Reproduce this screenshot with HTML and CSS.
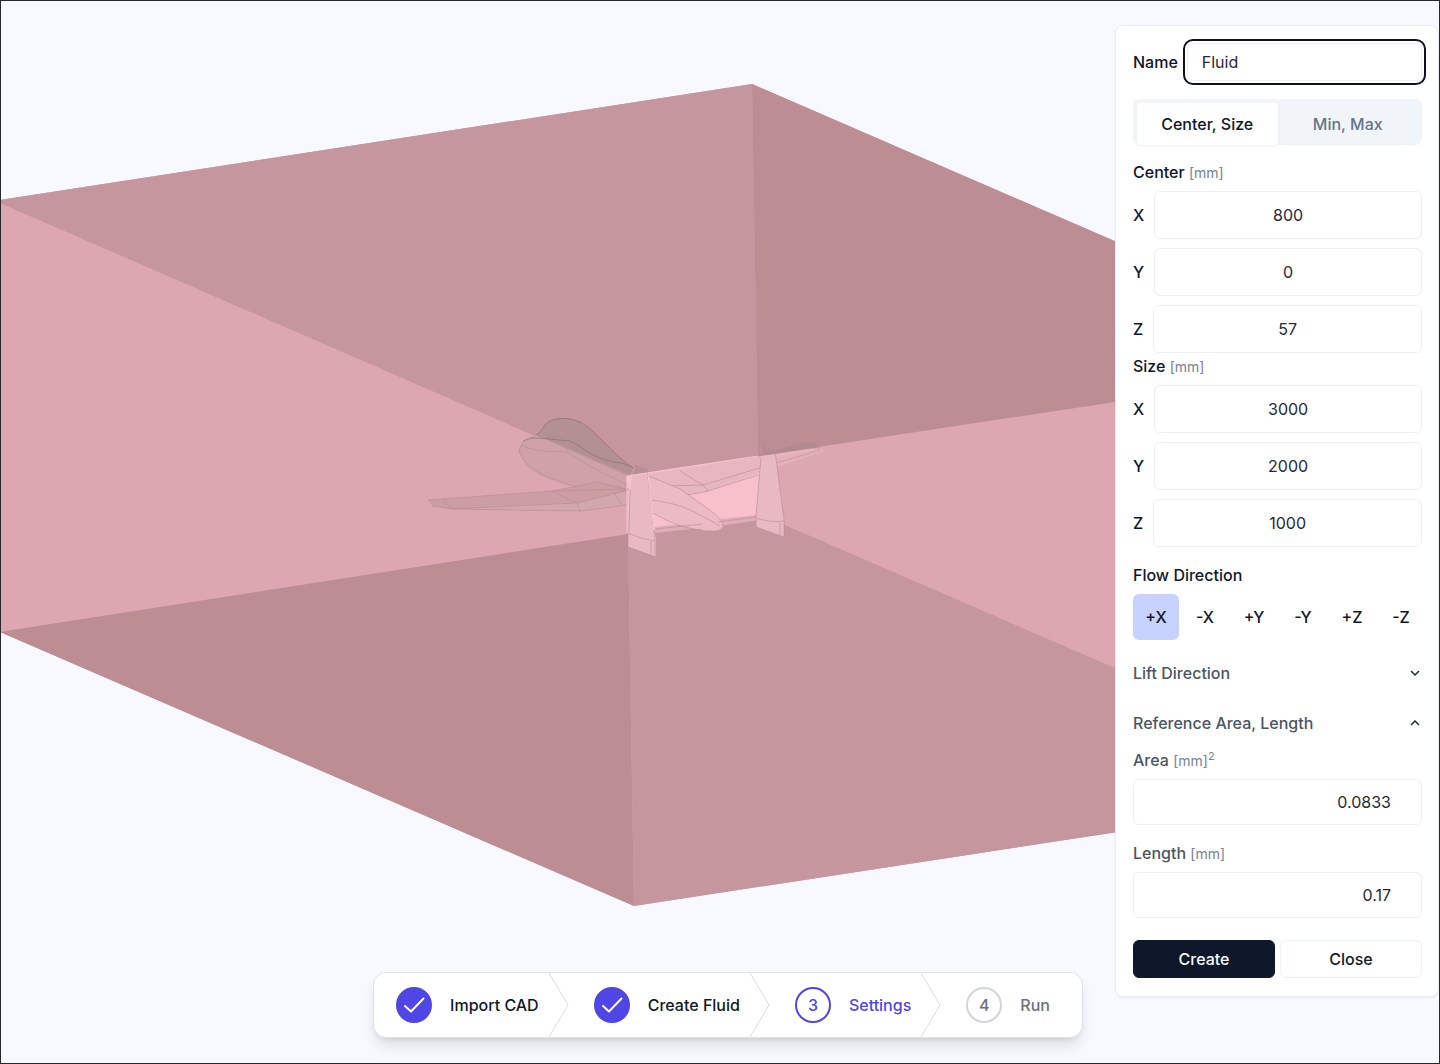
FILE: index.html
```html
<!DOCTYPE html>
<html lang="en">
<head>
<meta charset="utf-8">
<meta name="viewport" content="width=device-width, initial-scale=1">
<title>Create Fluid</title>
<link rel="stylesheet" href="styles.css">
</head>
<body>
<main class="workspace">
  <svg class="scene" viewBox="1 1 1438 1062" preserveAspectRatio="xMidYMid slice" role="img" aria-label="Aircraft inside the fluid domain box">
    <!-- fluid domain -->
    <path fill="#dca7b0" d="M0 200 752 84 1438 381V783L634 906 0 632Z"/>
    <path fill="#c5969d" d="M0 200 752 84 758 457 627 476 0 203Z"/>
    <path fill="#bc8e94" d="M752 84 1438 381V353L758 456Z"/>
    <path fill="#bc8e94" d="M0 632 628 534 634 906Z"/>
    <path fill="#c5969d" d="M628 534 764 516 1438 808V783L634 906Z"/>
    <path fill="#f8c0cb" d="M627 476 760 456V517L628 535Z"/>
    <!-- front fuselage and left wing -->
    <path fill="#cfa1a8" d="M536 435Q524 438 523 443Q517 448 519 452C524 466 530 471 543 477Q560 484 577 487L627 493V476Z"/>
    <path fill="#b39093" d="M536 435C542 433 542 425 550 421Q563 415 580 422C596 430 610 452 633 468L630 475Z"/>
    <path fill="#cd9da4" d="M428 500 552 491 598 482 628 488V505L580 511 452 509 432 506Z"/>
    <path fill="#d3a8ad" d="M452 509 577 503 617 493 628 492V505L580 511Z"/>
    <g class="edge edge-dark">
      <path d="M523 441Q530 437 538 438L570 441C585 448 595 461 622 463L634 468M536 435C542 433 542 425 550 421Q563 415 580 422C596 430 610 452 633 468"/>
    </g>
    <g class="edge">
      <path d="M522 445Q532 452 567 452C578 458 590 468 628 485M519 450C524 467 540 476 577 487M536 435 523 442 519 451"/>
      <path d="M428 500 552 491 598 482 628 490M432 506 452 509 577 503 617 493 629 489M443 500 452 509 580 511 627 505M552 491 577 503 580 511M613 492Q618 498 621 505M552 491 629 489"/>
    </g>
    <!-- right wing -->
    <path fill="#e8b6c0" d="M648 474 760 456 803 447 824 451 777 467 708 491 683 496 648 479Z"/>
    <path fill="#e3b1ba" d="M777 456 822 449 824 451 777 467Z"/>
    <path fill="#b1898f" d="M740 459 762 454Q790 446 803 443L813 443 821 447 775 454Z"/>
    <g class="edge">
      <path d="M680 471 703 485 708 491 758 475M667 486 703 485 820 450M683 496 708 491"/>
    </g>
    <!-- tailplane and rear fuselage -->
    <path fill="#dfadb7" d="M655 527 772 513V518L720 526 655 533Z"/>
    <path fill="#ebbac4" d="M648 475Q664 482 680 489L707 508Q723 519 723 526Q723 532 710 531Q685 529 653 513Z"/>
    <g class="edge">
      <path d="M648 476Q664 482 680 489L707 508Q723 519 723 526Q722 532 708 531M652 500Q672 503 683 507T720 526M653 513Q680 529 702 530M655 529 703 524M718 522 771 515"/>
    </g>
    <!-- fins -->
    <path fill="#e9b9c3" d="M634 466 647 469 652 521 656 538V557L628 547V522L630 490Z"/>
    <path fill="#e9b9c3" d="M762 445 775 450 784 520V537L756 527V512L761 457Z"/>
    <path fill="#b98e94" d="M633 475 635 465 647 469 648 473Z"/>
    <path fill="#b58a90" d="M761 456 762 445 775 450 776 454Z"/>
    <g class="edge">
      <path d="M635 465 647 469 655 540V557L628 547V533Q640 539 655 541M651 541V555M633 474 635 465M629 532 630 490"/>
      <path d="M762 445 775 450 784 520V537L756 527V518Q770 523 784 521M780 522V536M761 457 756 518"/>
    </g>
    <path class="edge-light" d="M627 476 758 456M627 476V533M648 474 654 530"/>
  </svg>

  <form class="panel" onsubmit="return false">
    <div class="name-row">
      <label for="name">Name</label>
      <input class="input name-input" id="name" type="text" value="Fluid">
    </div>
    <div class="tabs" role="tablist">
      <button class="tab tab-active" type="button" role="tab" aria-selected="true">Center, Size</button>
      <button class="tab" type="button" role="tab" aria-selected="false">Min, Max</button>
    </div>

    <fieldset class="vector center-vector">
      <legend>Center <span class="unit">[mm]</span></legend>
      <div class="axis"><label for="cx">X</label><input class="input" id="cx" type="text" value="800"></div>
      <div class="axis"><label for="cy">Y</label><input class="input" id="cy" type="text" value="0"></div>
      <div class="axis"><label for="cz">Z</label><input class="input" id="cz" type="text" value="57"></div>
    </fieldset>
    <fieldset class="vector size-vector">
      <legend>Size <span class="unit">[mm]</span></legend>
      <div class="axis"><label for="sx">X</label><input class="input" id="sx" type="text" value="3000"></div>
      <div class="axis"><label for="sy">Y</label><input class="input" id="sy" type="text" value="2000"></div>
      <div class="axis"><label for="sz">Z</label><input class="input" id="sz" type="text" value="1000"></div>
    </fieldset>

    <fieldset class="flow">
      <legend>Flow Direction</legend>
      <div class="directions">
        <button class="direction direction-on" type="button" aria-pressed="true">+X</button>
        <button class="direction" type="button" aria-pressed="false">-X</button>
        <button class="direction" type="button" aria-pressed="false">+Y</button>
        <button class="direction" type="button" aria-pressed="false">-Y</button>
        <button class="direction" type="button" aria-pressed="false">+Z</button>
        <button class="direction" type="button" aria-pressed="false">-Z</button>
      </div>
    </fieldset>

    <div class="accordion">
      <button class="accordion-head" type="button" aria-expanded="false">Lift Direction
        <svg class="chevron" viewBox="0 0 14 14" aria-hidden="true"><path d="M3 5 7 9 11 5"/></svg>
      </button>
      <button class="accordion-head" type="button" aria-expanded="true">Reference Area, Length
        <svg class="chevron" viewBox="0 0 14 14" aria-hidden="true"><path d="M3 9 7 5 11 9"/></svg>
      </button>
      <div class="accordion-body">
        <div class="field">
          <label for="area">Area <span class="unit">[mm]<sup>2</sup></span></label>
          <input class="input field-input" id="area" type="text" value="0.0833">
        </div>
        <div class="field">
          <label for="length">Length <span class="unit">[mm]</span></label>
          <input class="input field-input" id="length" type="text" value="0.17">
        </div>
      </div>
    </div>

    <div class="actions">
      <button class="btn btn-primary" type="submit">Create</button>
      <button class="btn" type="button">Close</button>
    </div>
  </form>

  <nav class="stepper" aria-label="Progress">
    <ol class="steps">
      <li class="step">
        <a class="step-link step-done" href="#import">
          <span class="badge"><svg class="check" viewBox="0 0 24 24" aria-hidden="true"><path d="M3 13 9 18.500 21.500 5.500"/></svg></span>Import CAD</a>
        <svg class="divider" viewBox="0 0 20 64" aria-hidden="true"><path d="M0 0 19 32 0 64"/></svg>
      </li>
      <li class="step">
        <a class="step-link step-done" href="#fluid">
          <span class="badge"><svg class="check" viewBox="0 0 24 24" aria-hidden="true"><path d="M3 13 9 18.500 21.500 5.500"/></svg></span>Create Fluid</a>
        <svg class="divider" viewBox="0 0 20 64" aria-hidden="true"><path d="M0 0 19 32 0 64"/></svg>
      </li>
      <li class="step">
        <a class="step-link step-current" href="#settings" aria-current="step"><span class="badge">3</span>Settings</a>
        <svg class="divider" viewBox="0 0 20 64" aria-hidden="true"><path d="M0 0 19 32 0 64"/></svg>
      </li>
      <li class="step">
        <a class="step-link step-next" href="#run"><span class="badge">4</span>Run</a>
      </li>
    </ol>
  </nav>
</main>
</body>
</html>
```
FILE: styles.css
```css
*, *::before, *::after { box-sizing: border-box; }

body {
  margin: 0;
  background: #f8f9fe;
  color: #0f172a;
  font: 500 16px/24px Inter, "Liberation Sans", sans-serif;
}

button, input { font: inherit; color: inherit; }
button { cursor: pointer; background: none; border: 0; padding: 0; }
fieldset { border: 0; margin: 0; padding: 0; min-width: 0; }
legend { padding: 0; margin-bottom: 6px; }

.workspace {
  position: relative;
  display: grid;
  min-height: 100vh;
  border: 1px solid #29292c;
  overflow: hidden;
}

/* 3D view */
.scene { position: absolute; inset: 0; width: 100%; height: 100%; }
.edge { fill: none; stroke: #b98a92; stroke-width: 1; stroke-opacity: .6; }
.edge-dark { stroke: #866a6d; }
.edge-light { fill: none; stroke: #f7c8d1; stroke-width: 1; }

/* Properties panel */
.panel {
  grid-area: 1 / 1;
  justify-self: end;
  align-self: start;
  z-index: 1;
  width: 324px;
  margin: 24px 0;
  padding: 17px 16px 18px 17px;
  background: #fff;
  border: 1px solid #e9edf4;
  border-radius: 8px;
  box-shadow: 0 1px 2px rgba(15, 23, 42, .06);
}

.name-row { display: flex; align-items: center; gap: 9px; margin-bottom: 18px; }

.input {
  flex: 1;
  width: 100%;
  min-width: 0;
  background: #fff;
  border: 1px solid #eeeff4;
  border-radius: 6px;
  color: #262838;
  font-weight: 400;
}
.name-input { height: 38px; padding: 0 14px; outline: 2px solid #0f1123; outline-offset: 2px; }

.tabs {
  display: grid;
  grid-template-columns: 1fr 1fr;
  height: 46px;
  padding: 4px 4px 0;
  background: #f1f5f9;
  border-radius: 6px;
}
.tab { color: #64748b; }
.tab-active { background: #fff; color: #0f172a; border-radius: 3px; box-shadow: 0 1px 2px rgba(15, 23, 42, .06); }

.center-vector { margin-top: 15px; }
.size-vector { margin-top: 1px; }
.unit { color: #7a8190; font-size: 14px; font-weight: 400; }
.unit sup { font-size: 11px; line-height: 0; }
.axis { display: flex; align-items: center; gap: 10px; margin-bottom: 9px; }
.axis:last-child { margin-bottom: 0; }
.axis .input { height: 48px; text-align: center; }

.flow { margin-top: 16px; }
.flow legend { margin-bottom: 7px; }
.directions { display: flex; gap: 3px; }
.direction { flex: none; width: 46px; height: 46px; border-radius: 6px; }
.direction-on { background: #c7d2fe; }

.accordion { margin-top: 8px; color: #4b5563; }
.accordion-head {
  display: flex;
  align-items: center;
  justify-content: space-between;
  width: 100%;
  height: 50px;
  text-align: left;
}
.chevron { width: 14px; height: 14px; fill: none; stroke: #1f2937; stroke-width: 1.5; }
.accordion-body { display: grid; gap: 16px; }
.field { display: grid; gap: 6px; }
.field-input { height: 46px; padding: 0 30px; text-align: right; }

.actions { display: grid; grid-template-columns: 1fr 1fr; gap: 5px; margin-top: 22px; }
.btn { height: 38px; border: 1px solid #eef1f6; border-radius: 6px; background: #fff; }
.btn-primary { background: #0f172a; border-color: #0f172a; color: #f8fafc; }

/* Progress steps */
.stepper {
  grid-area: 1 / 1;
  justify-self: center;
  align-self: end;
  margin: 0 0 25px 16px;
  background: #fff;
  border: 1px solid #dfe2e7;
  border-radius: 13px;
  box-shadow: 0 10px 15px -3px rgba(0, 0, 0, .12), 0 4px 6px -4px rgba(0, 0, 0, .12);
}
.steps { display: flex; margin: 0; padding: 0 32px 0 22px; list-style: none; }
.step { display: flex; align-items: center; height: 64px; }
.step-link { display: flex; align-items: center; gap: 18px; color: #111827; text-decoration: none; white-space: nowrap; }
.badge {
  display: grid;
  place-items: center;
  width: 36px;
  height: 36px;
  border: 2px solid #d1d5db;
  border-radius: 50%;
}
.step-done .badge { background: #4f46e5; border-color: #4f46e5; }
.step-current { color: #4f46e5; }
.step-current .badge { border-color: #4f46e5; }
.step-next { color: #6b7280; }
.check { width: 24px; height: 24px; fill: none; stroke: #fff; stroke-width: 2; stroke-linecap: round; stroke-linejoin: round; }
.divider { width: 20px; height: 64px; margin: 0 25px 0 10px; fill: none; stroke: #d9dce2; stroke-width: 1; }
```
